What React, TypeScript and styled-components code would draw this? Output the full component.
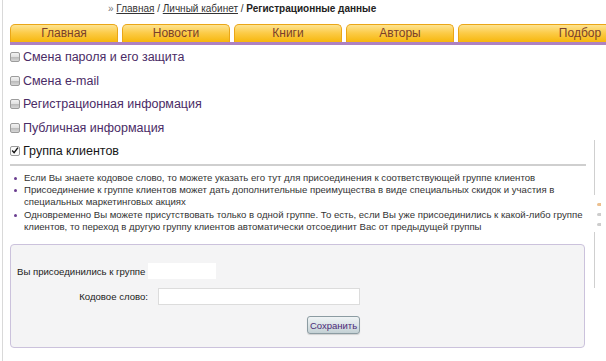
import styled, { createGlobalStyle } from "styled-components";

const GlobalStyle = createGlobalStyle`
  html, body {
    margin: 0;
    padding: 0;
    background: #ffffff;
  }
  body {
    font-family: "Liberation Sans", Arial, sans-serif;
    color: #222;
    overflow: hidden;
  }
`;

const TABS = ["Главная", "Новости", "Книги", "Авторы", "Подбор"];

const SECTIONS = [
    { title: "Смена пароля и его защита", checked: false },
    { title: "Смена e-mail", checked: false },
    { title: "Регистрационная информация", checked: false },
    { title: "Публичная информация", checked: false },
    { title: "Группа клиентов", checked: true },
];

const App = () => {
    return <Page>
        <GlobalStyle />
        <Frame>
            <Breadcrumb>
                <span className="raquo">»</span> <a href="#">Главная</a> / <a href="#">Личный кабинет</a> / <b>Регистрационные данные</b>
            </Breadcrumb>

            <TabBar>
                {TABS.map((t, i) => (
                    <Tab key={t} last={i === TABS.length - 1}>{t}</Tab>
                ))}
            </TabBar>

            <Body>
                <Main>
                    <SectionList>
                        {SECTIONS.map((s) => (
                            <SectionRow key={s.title} active={s.checked}>
                                <Check checked={s.checked}>
                                    {s.checked && (
                                        <svg width="9" height="9" viewBox="0 0 9 9">
                                            <path d="M1.3 4.6 L3.5 7 L7.8 1.2" fill="none" stroke="#111" strokeWidth="1.6" />
                                        </svg>
                                    )}
                                </Check>
                                <span>{s.title}</span>
                            </SectionRow>
                        ))}
                    </SectionList>

                    <Notes>
                        <li>Если Вы знаете кодовое слово, то можете указать его тут для присоединения к соответствующей группе клиентов</li>
                        <li>Присоединение к группе клиентов может дать дополнительные преимущества в виде специальных скидок и участия в<br />специальных маркетинговых акциях</li>
                        <li>Одновременно Вы можете присутствовать только в одной группе. То есть, если Вы уже присоединились к какой-либо группе<br />клиентов, то переход в другую группу клиентов автоматически отсоединит Вас от предыдущей группы</li>
                    </Notes>

                    <FormBox>
                        <GroupLine>
                            <span>Вы присоединились к группе</span>
                            <GroupName />
                        </GroupLine>
                        <FieldRow>
                            <FieldLabel>Кодовое слово:</FieldLabel>
                            <TextInput type="text" />
                        </FieldRow>
                        <ButtonRow>
                            <SaveButton type="button">Сохранить</SaveButton>
                        </ButtonRow>
                    </FormBox>
                </Main>

                <Sidebar>
                    <SideBlock height={55} />
                    <SideMark color="#ecc08f" top={8} />
                    <SideMark color="#cdcdcd" top={7} />
                    <SideMark color="#cdcdcd" top={7} />
                    <SideBlock height={56} top={6} />
                </Sidebar>
            </Body>
        </Frame>
    </Page>
};

const Page = styled.div`
  width: 606px;
  height: 361px;
  overflow: hidden;
  padding-left: 2px;
  box-sizing: border-box;
`;

const Frame = styled.div`
  height: 100%;
  border-left: 1px solid #d9d9d9;
  padding-left: 7px;
`;

const Breadcrumb = styled.div`
  height: 18px;
  line-height: 18px;
  padding-left: 98px;
  margin-bottom: 6px;
  font-size: 10px;
  color: #333;
  white-space: nowrap;

  a {
    color: #333;
    text-decoration: underline;
  }
  b {
    color: #222;
  }
  .raquo {
    color: #777;
  }
`;

const TabBar = styled.div`
  display: flex;
  gap: 4px;
  height: 18px;
  border-bottom: 3px solid #ad82c2;
  white-space: nowrap;
`;

const Tab = styled.div<{ last?: boolean }>`
  flex: ${({ last }) => (last ? "0 0 244px" : "0 0 108px")};
  box-sizing: border-box;
  height: 18px;
  line-height: 17px;
  text-align: center;
  font-size: 12px;
  color: #7a3f2b;
  background: linear-gradient(to bottom, #fde391 0%, #fccc4a 45%, #f7b70c 100%);
  border: 1px solid #eaa617;
  border-bottom: none;
  border-radius: 5px 5px 0 0;
`;

const Body = styled.div`
  display: flex;
  gap: 8px;
`;

const Main = styled.div`
  width: 576px;
  flex-shrink: 0;
`;

const SectionList = styled.div`
  border-bottom: 2px solid #cfcfcf;
`;

const SectionRow = styled.div<{ active?: boolean }>`
  display: flex;
  align-items: center;
  gap: 3px;
  height: 23.7px;
  font-size: 12.5px;
  color: ${({ active }) => (active ? "#161616" : "#4a2b66")};
  &:last-child {
    height: 22px;
    padding-bottom: 2px;
  }
`;

const Check = styled.span<{ checked?: boolean }>`
  width: 10px;
  height: 10px;
  flex-shrink: 0;
  box-sizing: border-box;
  border: 1px solid #9c9c9c;
  border-radius: 2px;
  display: flex;
  align-items: center;
  justify-content: center;
  background: ${({ checked }) =>
        checked
            ? "#fafafa"
            : "linear-gradient(to bottom, #f2f2f2 0%, #e2e2e2 45%, #b9b9b9 50%, #d6d6d6 100%)"};
`;

const Notes = styled.ul`
  margin: 6px 0 0 0;
  padding: 0 0 0 14px;
  font-size: 9.6px;
  line-height: 12.3px;
  color: #333;
  white-space: nowrap;

  li {
    list-style: none;
    position: relative;
  }
  li::before {
    content: "";
    position: absolute;
    left: -10px;
    top: 5px;
    width: 3px;
    height: 3px;
    border-radius: 50%;
    background: #6a3d8f;
  }
`;

const FormBox = styled.div`
  margin-top: 11px;
  width: 575px;
  height: 104px;
  box-sizing: border-box;
  background: #f4f4f5;
  border: 1px solid #cbc2dc;
  border-radius: 4px;
  padding: 18px 0 0 6px;
  font-size: 9.6px;
  color: #222;
`;

const GroupLine = styled.div`
  display: flex;
  align-items: center;
  gap: 3px;
  height: 16px;
`;

const GroupName = styled.span`
  display: block;
  width: 68px;
  height: 16px;
  background: #ffffff;
`;

const FieldRow = styled.div`
  display: flex;
  align-items: center;
  margin-top: 9px;
  height: 17px;
`;

const FieldLabel = styled.span`
  width: 141px;
  text-align: right;
  padding-right: 10px;
  box-sizing: border-box;
`;

const TextInput = styled.input`
  width: 202px;
  height: 17px;
  box-sizing: border-box;
  border: 1px solid #dcdcdc;
  background: #fff;
  padding: 0 3px;
  outline: none;
`;

const ButtonRow = styled.div`
  display: flex;
  padding-left: 290px;
  margin-top: 11px;
`;

const SaveButton = styled.button`
  width: 53px;
  height: 18px;
  padding: 0;
  font-family: "Liberation Sans", Arial, sans-serif;
  font-size: 9.5px;
  color: #4b2a78;
  background: linear-gradient(to bottom, #f0f4f5 0%, #d9e2e5 55%, #c3d0d4 100%);
  border: 1px solid #8c9ca2;
  border-radius: 3px;
  box-shadow: 0 1px 1px rgba(0, 0, 0, 0.15);
`;

const Sidebar = styled.div`
  flex: 1;
  overflow: hidden;
  padding-top: 95px;
`;

const SideBlock = styled.div<{ height: number; top?: number }>`
  height: ${({ height }) => height}px;
  margin-top: ${({ top }) => top ?? 0}px;
  border-left: 1px solid #cfcfcf;
`;

/* clipped first letters of the sidebar text, only a sliver is visible */
const SideMark = styled.div<{ color: string; top: number }>`
  width: 4px;
  height: 3px;
  margin: ${({ top }) => top}px 0 0 3px;
  border-radius: 2px 0 0 2px;
  background: ${({ color }) => color};
`;

export default App;
